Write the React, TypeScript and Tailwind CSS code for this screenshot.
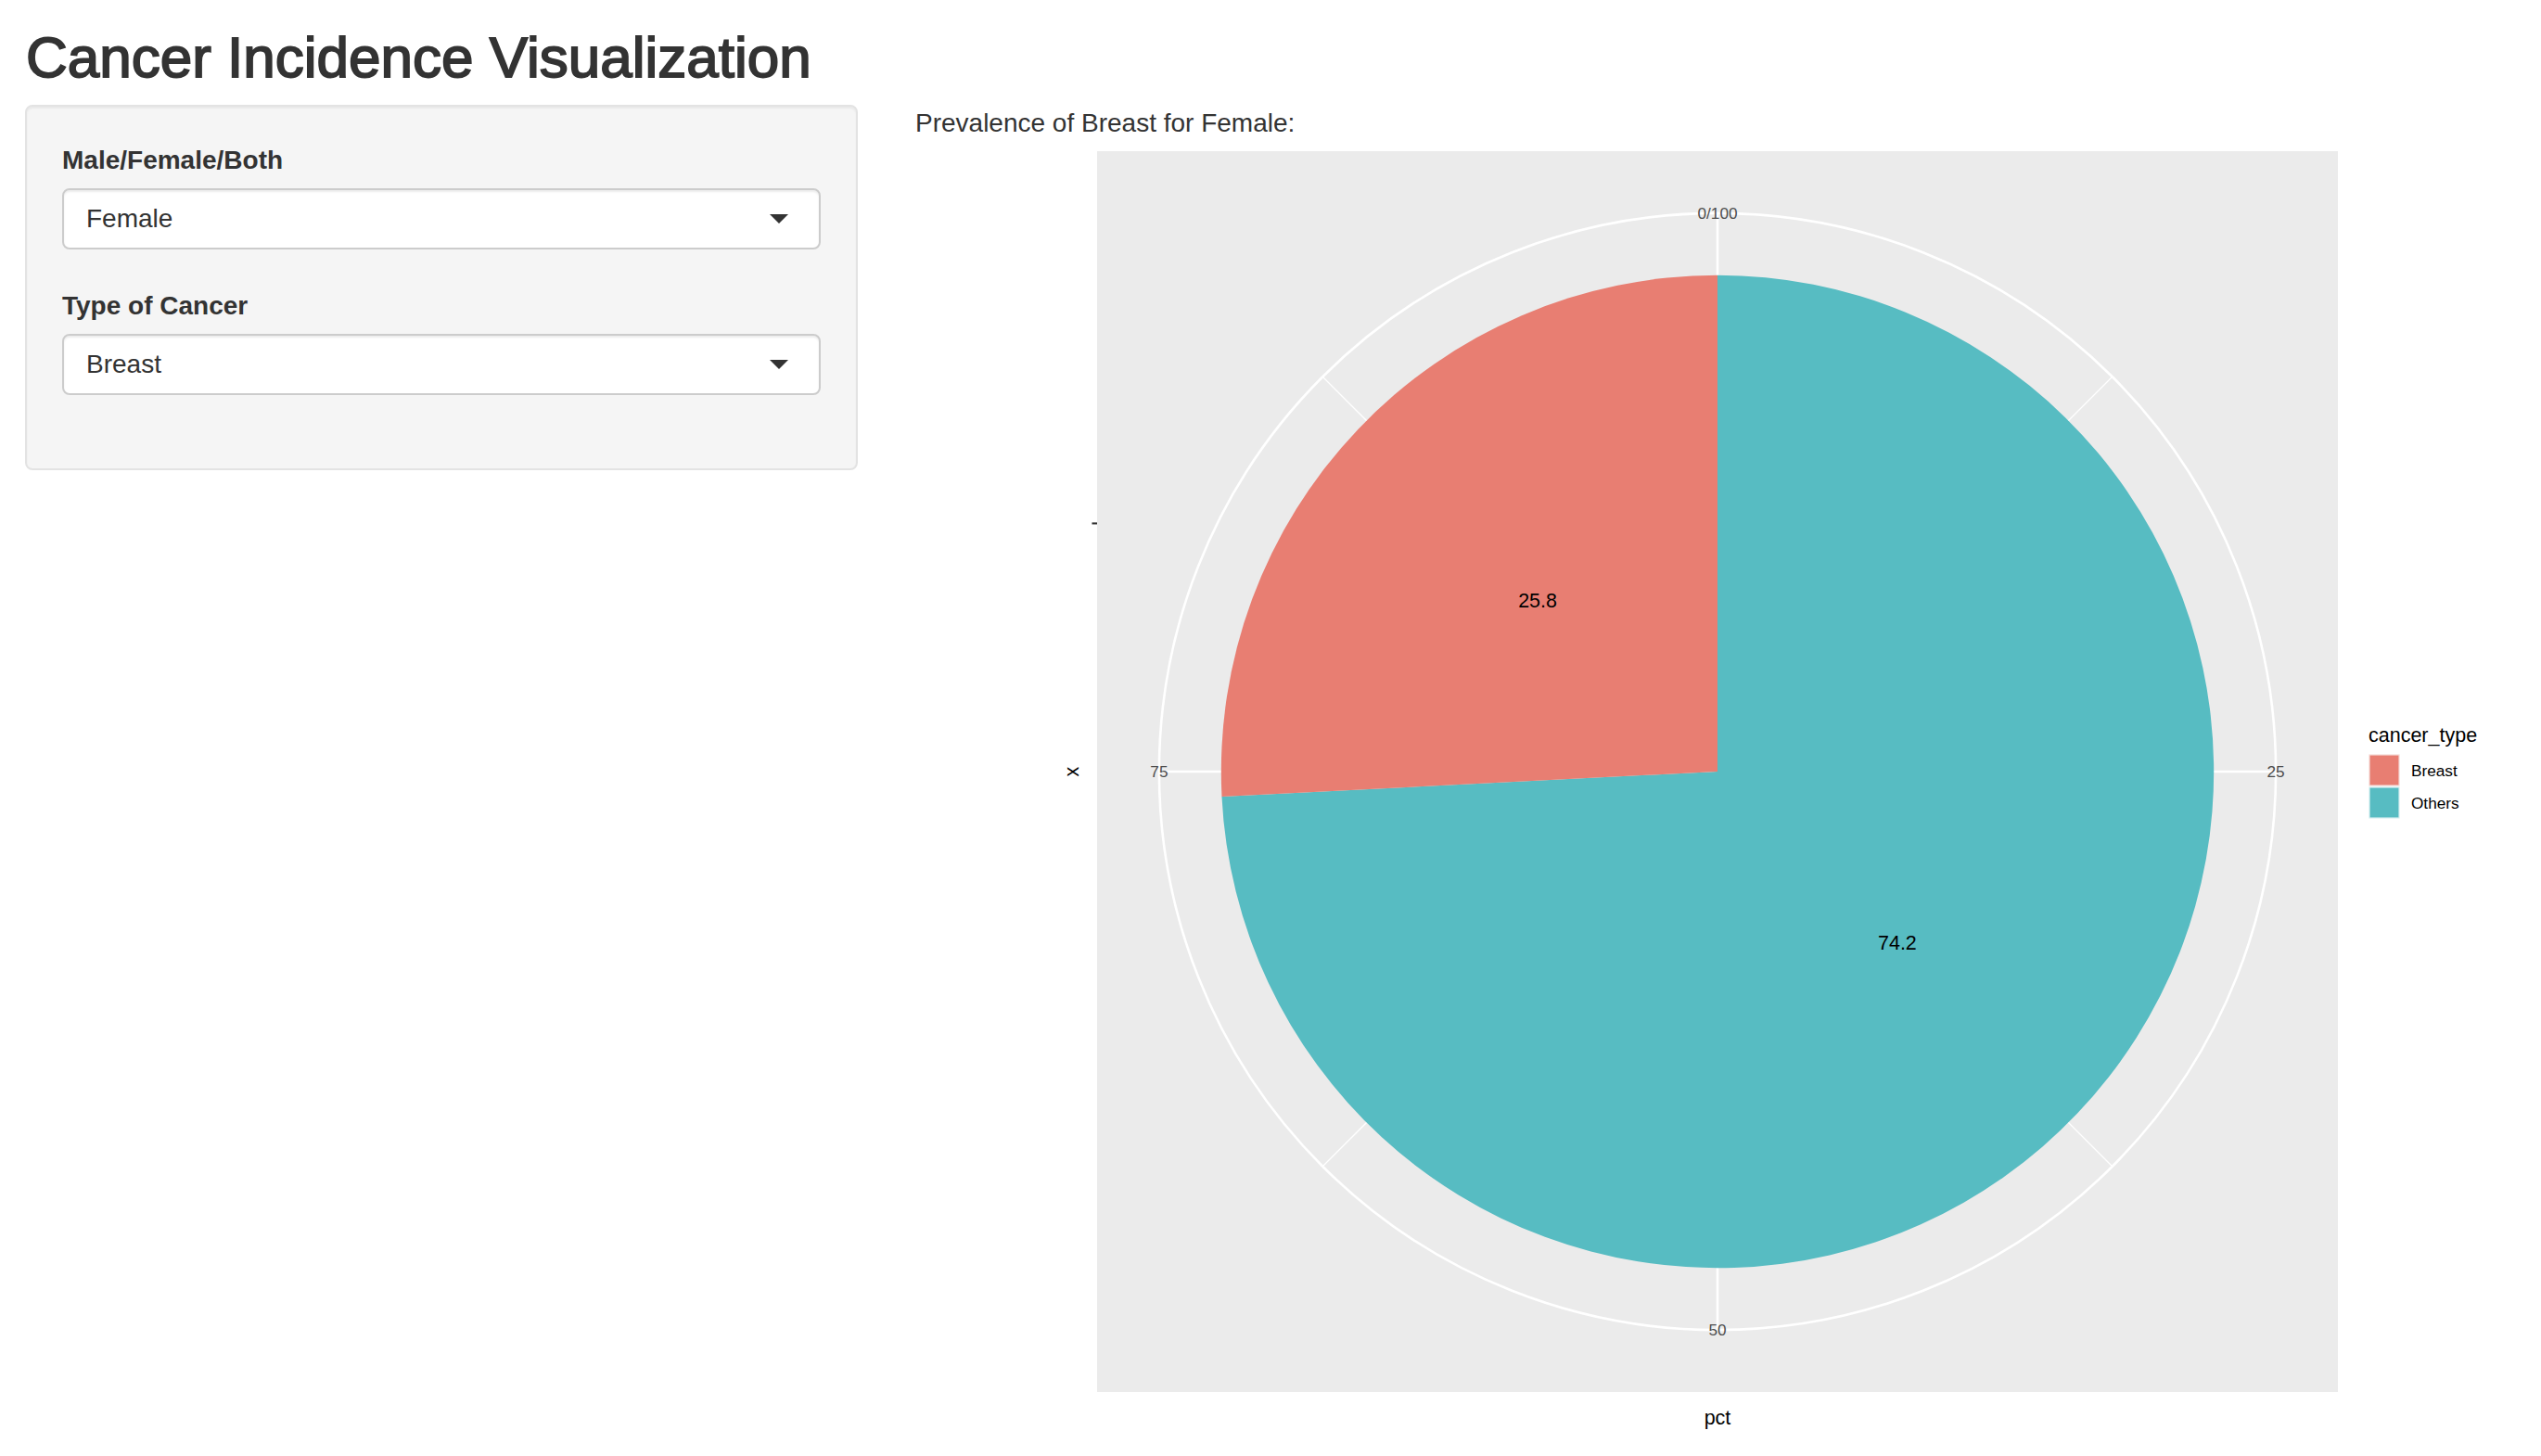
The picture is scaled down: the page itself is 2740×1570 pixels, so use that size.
import React from 'react';

// ggplot-style polar pie, measured in page pixels
const PANEL = 1338;
const PX = 196;
const PY = 10;
const CX = PX + PANEL / 2;
const CY = PY + PANEL / 2;
const R_PIE = 0.4 * PANEL;
const R_OUT = 0.45 * PANEL;

const slices = [
  { label: 'Others', value: 74.2, color: '#57BCC2' },
  { label: 'Breast', value: 25.8, color: '#E87E72' },
];

function pt(f: number, r: number) {
  const a = f * Math.PI * 2;
  return [CX + r * Math.sin(a), CY - r * Math.cos(a)];
}

function slicePath(f0: number, f1: number) {
  const [x0, y0] = pt(f0, R_PIE);
  const [x1, y1] = pt(f1, R_PIE);
  const large = f1 - f0 > 0.5 ? 1 : 0;
  return `M ${CX} ${CY} L ${x0} ${y0} A ${R_PIE} ${R_PIE} 0 ${large} 1 ${x1} ${y1} Z`;
}

const FONT = 'Liberation Sans, Arial, sans-serif';

function PiePlot() {
  let acc = 0;
  const parts = slices.map((s) => {
    const f0 = acc / 100;
    acc += s.value;
    const f1 = acc / 100;
    return { ...s, f0, f1, mid: (f0 + f1) / 2 };
  });

  const major = [0, 0.25, 0.5, 0.75];
  const minor = [0.125, 0.375, 0.625, 0.875];
  const thetaLabels = [
    { f: 0, text: '0/100' },
    { f: 0.25, text: '25' },
    { f: 0.5, text: '50' },
    { f: 0.75, text: '75' },
  ];

  return (
    <svg width={1753} height={1417} viewBox="0 0 1753 1417" fontFamily={FONT}>
      <rect x={PX} y={PY} width={PANEL} height={PANEL} fill="#EBEBEB" />

      {/* theta grid */}
      {minor.map((f) => {
        const [x, y] = pt(f, R_OUT);
        return <line key={f} x1={CX} y1={CY} x2={x} y2={y} stroke="#fff" strokeWidth={1.3} />;
      })}
      {major.map((f) => {
        const [x, y] = pt(f, R_OUT);
        return <line key={f} x1={CX} y1={CY} x2={x} y2={y} stroke="#fff" strokeWidth={2.6} />;
      })}
      <circle cx={CX} cy={CY} r={R_OUT} fill="none" stroke="#fff" strokeWidth={2.6} />

      {/* slices */}
      {parts.map((p) => (
        <path key={p.label} d={slicePath(p.f0, p.f1)} fill={p.color} />
      ))}

      {/* value labels */}
      {parts.map((p) => {
        const [x, y] = pt(p.mid, 0.2 * PANEL);
        return (
          <text key={p.label} x={x} y={y + 7.7} textAnchor="middle" fontSize={21.5} fill="#000">
            {p.value.toFixed(1)}
          </text>
        );
      })}

      {/* theta labels */}
      {thetaLabels.map((l) => {
        const [x, y] = pt(l.f, R_OUT);
        return (
          <text key={l.text} x={x} y={y + 6.2} textAnchor="middle" fontSize={17.2} fill="#4D4D4D">
            {l.text}
          </text>
        );
      })}

      {/* y axis tick */}
      <line x1={PX - 5.5} y1={CY - 0.2 * PANEL} x2={PX} y2={CY - 0.2 * PANEL} stroke="#333" strokeWidth={2.1} />

      {/* axis titles */}
      <text transform={`translate(176 ${CY}) rotate(-90)`} textAnchor="middle" fontSize={21.5} fill="#000">
        x
      </text>
      <text x={CX} y={1383} textAnchor="middle" fontSize={21.5} fill="#000">
        pct
      </text>

      {/* legend */}
      <text x={1567} y={647} fontSize={21.5} fill="#000">
        cancer_type
      </text>
      <rect x={1568} y={661} width={32} height={33} fill="#E87E72" stroke="#F3D9D5" strokeWidth={1.2} />
      <rect x={1568} y={696} width={32} height={33} fill="#57BCC2" stroke="#D5EEF0" strokeWidth={1.2} />
      <text x={1613} y={684} fontSize={17.2} fill="#000">
        Breast
      </text>
      <text x={1613} y={719} fontSize={17.2} fill="#000">
        Others
      </text>
    </svg>
  );
}

function SelectBox({ value }: { value: string }) {
  return (
    <div className="flex h-[66px] items-center justify-between rounded-[8px] border-2 border-[#cccccc] bg-white pl-[24px] pr-[33px] shadow-[inset_0_2px_2px_rgba(0,0,0,0.075)]">
      <span className="text-[28px] leading-[40px] text-[#333]">{value}</span>
      <svg width="20" height="10" viewBox="0 0 20 10">
        <path d="M0 0 L20 0 L10 10 Z" fill="#333" />
      </svg>
    </div>
  );
}

function FormGroup({ label, value }: { label: string; value: string }) {
  return (
    <div className="mb-[41px]">
      <div className="mb-[10px] text-[28px] font-bold leading-[40px] text-[#333]">{label}</div>
      <SelectBox value={value} />
    </div>
  );
}

export default function App() {
  return (
    <div className="h-[1570px] w-[2740px] overflow-hidden bg-white font-['Liberation_Sans',Arial,sans-serif] text-[#333]">
      <h2 className="pl-[28px] pt-[28px] text-[62px] font-medium leading-[68px] [-webkit-text-stroke:1.8px_#333]">
        Cancer Incidence Visualization
      </h2>

      <div className="mt-[17px] flex">
        {/* sidebar */}
        <div className="w-[952px] shrink-0 pl-[27px]">
          <div className="w-[898px] rounded-[8px] border-2 border-[#e3e3e3] bg-[#f5f5f5] px-[38px] pb-[38px] pt-[38px] shadow-[inset_0_2px_2px_rgba(0,0,0,0.05)]">
            <FormGroup label="Male/Female/Both" value="Female" />
            <FormGroup label="Type of Cancer" value="Breast" />
          </div>
        </div>

        {/* main */}
        <div className="flex-1 pl-[35px]">
          <div className="text-[28px] leading-[40px] text-[#333]">Prevalence of Breast for Female:</div>
          <PiePlot />
        </div>
      </div>
    </div>
  );
}
